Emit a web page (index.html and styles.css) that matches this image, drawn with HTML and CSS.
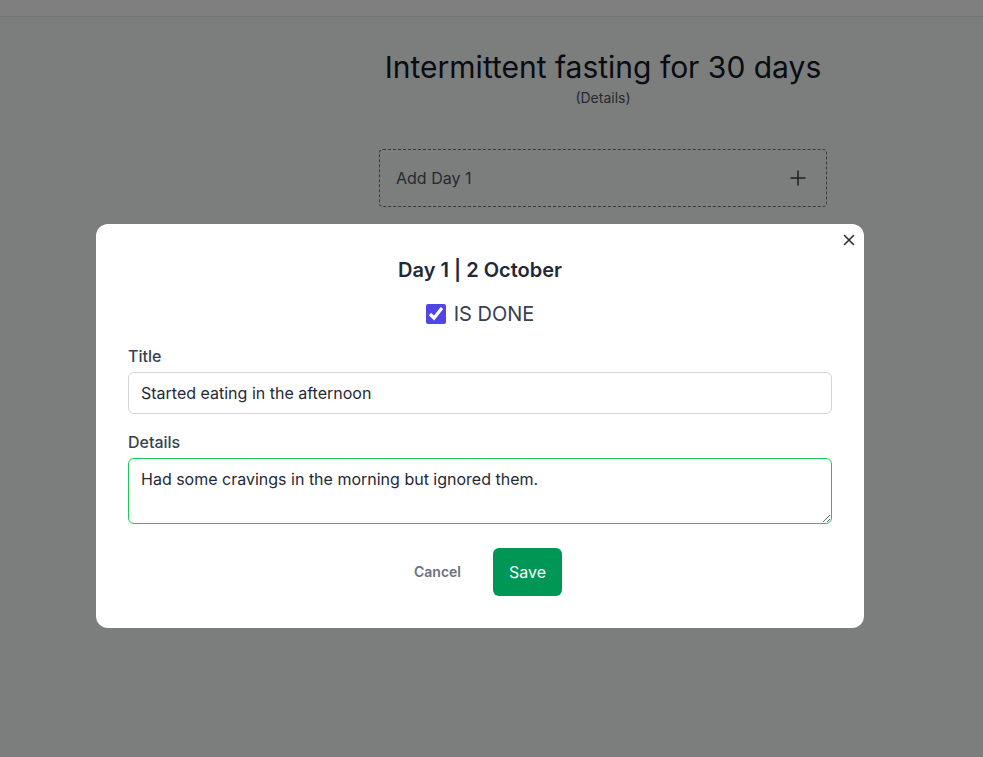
FILE: index.html
```html
<!DOCTYPE html>
<html lang="en">
<head>
  <meta charset="UTF-8">
  <meta name="viewport" content="width=device-width, initial-scale=1.0">
  <title>Intermittent fasting for 30 days</title>
  <link rel="stylesheet" href="styles.css">
</head>
<body>
  <header class="topbar"></header>

  <div class="layout">
    <aside class="sidebar"></aside>
    <main class="content">
      <h1 class="goal-title">Intermittent fasting for 30 days</h1>
      <p class="goal-details">(Details)</p>

      <button class="add-day" type="button">
        <span>Add Day 1</span>
        <svg width="24" height="24" viewBox="0 0 24 24" fill="none" stroke="currentColor" stroke-width="1.5" aria-hidden="true">
          <path d="M12 5v14M5 12h14" stroke-linecap="round"/>
        </svg>
      </button>
    </main>
  </div>

  <div class="overlay">
    <div class="modal" role="dialog" aria-labelledby="modalTitle">
      <button class="modal-close" type="button" aria-label="Close">
        <svg width="12" height="12" viewBox="0 0 12 12" fill="none" stroke="currentColor" stroke-width="1.5">
          <path d="M1.5 1.5l9 9M10.5 1.5l-9 9" stroke-linecap="round"/>
        </svg>
      </button>

      <h2 id="modalTitle" class="modal-title">Day 1 | 2 October</h2>

      <label class="done-row">
        <input type="checkbox" checked>
        <span>IS DONE</span>
      </label>

      <div class="field">
        <label for="dayTitle">Title</label>
        <input id="dayTitle" type="text" value="Started eating in the afternoon">
      </div>

      <div class="field">
        <label for="dayDetails">Details</label>
        <textarea id="dayDetails" rows="2" class="focused">Had some cravings in the morning but ignored them.</textarea>
      </div>

      <div class="modal-actions">
        <button class="btn-cancel" type="button">Cancel</button>
        <button class="btn-save" type="button">Save</button>
      </div>
    </div>
  </div>
</body>
</html>
```

FILE: styles.css
```css
html, body {
  margin: 0;
  padding: 0;
  height: 100%;
}

body {
  font-family: Inter, "Noto Sans", sans-serif;
  background-color: #f9fafb;
  color: #111827;
}

.topbar {
  height: 16px;
  background-color: #fff;
  border-bottom: 1px solid #e5e7eb;
}

.layout {
  display: flex;
}
.sidebar {
  width: 223px;
  flex-shrink: 0;
}
.content {
  flex: 1;
  display: flex;
  flex-direction: column;
  align-items: center;
  padding-top: 32px;
}

.goal-title {
  margin: 0;
  font-size: 30px;
  line-height: 36px;
  font-weight: 400;
  color: #111827;
}
.goal-details {
  margin: 3px 0 0;
  font-size: 14px;
  line-height: 20px;
  color: #4b5563;
}

.add-day {
  margin-top: 41px;
  width: 448px;
  display: flex;
  justify-content: space-between;
  align-items: center;
  padding: 16px;
  background: transparent;
  border: 1px dashed #6b7280;
  border-radius: 4px;
  font-family: inherit;
  font-size: 16px;
  line-height: 24px;
  color: #4b5563;
  cursor: pointer;
}
.add-day svg {
  color: #374151;
}

.overlay {
  position: fixed;
  inset: 0;
  background-color: rgba(0, 0, 0, 0.5);
  display: flex;
  justify-content: center;
  align-items: flex-start;
  padding: 224px 23px 0 0;
}

.modal {
  position: relative;
  width: 768px;
  box-sizing: border-box;
  padding: 32px;
  background-color: #fff;
  border-radius: 12px;
  display: flex;
  flex-direction: column;
}

.modal-close {
  position: absolute;
  top: 6px;
  right: 5px;
  padding: 4px;
  border: none;
  background: none;
  color: #1f2937;
  cursor: pointer;
  display: flex;
}

.modal-title {
  margin: 0;
  text-align: center;
  font-size: 20px;
  line-height: 28px;
  font-weight: 600;
  color: #1f2937;
}

.done-row {
  margin-top: 16px;
  display: flex;
  justify-content: center;
  align-items: center;
  gap: 8px;
  font-size: 20px;
  line-height: 28px;
  color: #374151;
}
.done-row input {
  width: 20px;
  height: 20px;
  margin: 0;
  accent-color: #4f46e5;
}

.field {
  margin-top: 16px;
  display: flex;
  flex-direction: column;
  gap: 4px;
}
.field label {
  font-size: 16px;
  line-height: 24px;
  font-weight: 500;
  color: #374151;
}
.field input,
.field textarea {
  box-sizing: border-box;
  width: 100%;
  margin: 0;
  padding: 8px 12px;
  border: 1px solid #d1d5db;
  border-radius: 6px;
  font-family: inherit;
  font-size: 16px;
  line-height: 24px;
  color: #1f2937;
  background: #fff;
}
.field textarea {
  display: block;
  height: 66px;
}
.field textarea.focused {
  border-color: #22c55e;
  outline: none;
}

.modal-actions {
  margin-top: 24px;
  display: flex;
  justify-content: center;
  gap: 16px;
}
.btn-cancel {
  padding: 12px 16px;
  border: none;
  background: none;
  font-family: inherit;
  font-size: 14px;
  line-height: 24px;
  font-weight: 600;
  color: #6b7280;
  cursor: pointer;
}
.btn-save {
  padding: 12px 16px;
  border: none;
  border-radius: 6px;
  background-color: #009655;
  color: #fff;
  font-family: inherit;
  font-size: 16px;
  line-height: 24px;
  cursor: pointer;
}
```
